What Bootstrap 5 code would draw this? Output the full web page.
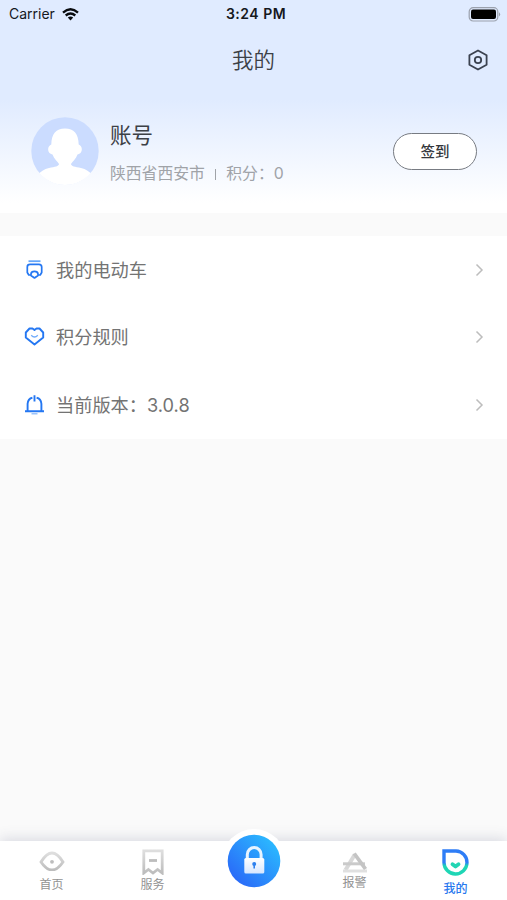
<!DOCTYPE html>
<html lang="zh-CN">
<head>
<meta charset="utf-8">
<meta name="viewport" content="width=device-width, initial-scale=1">
<title>我的</title>
<link href="https://cdn.jsdelivr.net/npm/bootstrap@5.3.0/dist/css/bootstrap.min.css" rel="stylesheet">
<style>
body{background:#fafafa;font-family:Inter,"Noto Sans CJK SC",sans-serif;color:#3c4046;height:900px;overflow:hidden}
svg{display:block;flex:none}
.hero{height:213px;background:linear-gradient(#e0ebff 0,#e0ebff 100px,#fff 203px)}
.statusbar{height:28px;padding:0 6px 0 9px;font-size:14px;line-height:28px;color:#15181d}
.clock{font-weight:600;font-size:14px;letter-spacing:.5px;padding-left:2px}
.side{width:120px}
.titlebar{height:64px;padding:0 19px}
.titlebar-gap{width:20px}
.page-title{font-size:21.5px;line-height:30px;font-weight:350}
.profile{height:121px;padding:0 30px 3px 31px}
.who{padding-left:11px}
.who-name{font-size:21.5px;line-height:30px;margin-top:4px}
.who-info{font-size:15.8px;line-height:24px;margin-top:12px;color:#a0a3a8;white-space:nowrap}
.who-bar{width:1.5px;height:11px;background:#a0a3a8;margin:0 10px 0 10px}
.sign{width:84px;height:37px;border:1px solid #777b82;background:#fff;font-size:14.5px;font-weight:500;padding:2px 0 0;color:#33363b}
.menu{margin-top:23px;height:203px;padding-top:.5px;background:#fff}
.menu .list-group-item{height:67.3px;padding:0 23px 0 24px;background:none;color:#737373;font-size:18.2px;line-height:28px}
.menu span{margin-left:11px}
.tabs{height:59px;background:#fff;box-shadow:0 -3px 12px rgba(70,80,120,.17);font-size:12px;line-height:16px;color:#929292}
.tab{width:101px;padding-top:8px}
.tab svg{margin-bottom:6px}
.tab.on{color:#2878ee;font-weight:500}
.lockwrap{width:64px;height:64px;background:#fff;margin-top:-12px}
</style>
<script src="https://cdn.jsdelivr.net/npm/bootstrap@5.3.0/dist/js/bootstrap.bundle.min.js"></script>
</head>
<body class="d-flex flex-column">
<header class="hero">
  <div class="statusbar d-flex justify-content-between align-items-center">
    <div class="side d-flex align-items-center gap-2">Carrier
      <svg style="margin-left:-1px" width="17" height="13" viewBox="0 0 17 13" fill="none" stroke="#090b0e" stroke-width="2.3"><path d="M1 4.6Q8.500-2 16 4.600M3.700 7.500Q8.500 3.500 13.300 7.500"/><path d="M5.800 9.500Q8.500 7.300 11.200 9.500L8.500 12.400Z" fill="#090b0e" stroke="none"/></svg>
    </div>
    <div class="clock">3:24 PM</div>
    <div class="side d-flex justify-content-end">
      <svg width="33" height="15" viewBox="0 0 33 15"><rect x="1.200" y=".7" width="28.600" height="13.300" rx="4" fill="none" stroke="#9ba1ad" stroke-width="1.200"/><rect x="3" y="2.600" width="25" height="9.500" rx="2" fill="#000"/><path d="M31 5.200q2.400 2.200 0 4.400z" fill="#9ba1ad"/></svg>
    </div>
  </div>
  <div class="titlebar d-flex justify-content-between align-items-center">
    <div class="titlebar-gap"></div>
    <h1 class="page-title m-0">我的</h1>
    <svg width="20" height="22" viewBox="0 0 20 22" fill="none" stroke="#3b4250" stroke-width="1.800"><path stroke-linejoin="round" d="M10 1.500 18.600 6.200V15.800L10 20.500 1.400 15.800V6.200Z"/><circle cx="10" cy="11" r="3.200"/></svg>
  </div>
  <div class="profile d-flex align-items-center">
    <svg width="68" height="68" viewBox="0 0 68 68"><defs><clipPath id="face"><circle cx="34" cy="34" r="34"/></clipPath></defs><circle cx="34" cy="34" r="33.700" fill="#cbdcff"/><g fill="#fff" clip-path="url(#face)"><path d="M34 11.500C25 11.500 20.500 17 20.300 27.500C16.500 29 16.500 34 18.500 36C19.500 37 20.700 37 21.500 37.500C23 42 26.500 44.500 28 47C28 49 24 50 18 51C13 52 10 54.500 5 59V68H63V59C58 54.500 55 52 50 51C44 50 40 49 40 47C41.500 44.500 45 42 46.500 37.500C47.300 37 48.500 37 49.500 36C51.500 34 51.500 29 47.700 27.500C47.500 17 43 11.500 34 11.500Z"/></g></svg>
    <div class="who flex-grow-1">
      <div class="who-name">账号</div>
      <div class="who-info d-flex align-items-center">陕西省西安市<i class="who-bar"></i>积分：0</div>
    </div>
    <button class="btn rounded-pill sign" type="button">签到</button>
  </div>
</header>

<main class="menu list-group list-group-flush rounded-0">
  <div class="list-group-item border-0 d-flex align-items-center">
    <svg width="21" height="22" viewBox="0 0 21 22" fill="none" stroke="#2477f2" stroke-width="1.700"><path d="M4.500 2.200H16.500" stroke="#65a7fa" stroke-width="1.800"/><path stroke-linejoin="round" d="M6.800 16H4.800L3.300 13.500V8Q3.300 5.300 6 5.300H15Q17.700 5.300 17.700 8V13.500L16.200 16H14.200"/><path stroke-linejoin="round" d="M7 16.500V14.800Q7.300 12.300 10.500 12.300T14 14.800V16.500L10.500 19Z"/></svg>
    <span class="flex-grow-1">我的电动车</span>
    <svg width="9" height="14" viewBox="0 0 9 14" fill="none" stroke="#bdbdbd" stroke-width="1.500"><path d="M1.500 1.500 7 7 1.500 12.500"/></svg>
  </div>
  <div class="list-group-item border-0 d-flex align-items-center">
    <svg width="21" height="22" viewBox="0 0 21 22" fill="none" stroke="#2477f2" stroke-width="1.900"><path stroke-linejoin="round" d="M10.500 4 8.500 2.500H5.500L1.800 6.500V11.500L10.500 18.500 19.200 11.500V6.500L15.500 2.500H12.500Z"/><path d="M7.200 9.300Q10.500 12.700 13.800 9.300" stroke="#74adfa" stroke-width="1.300"/></svg>
    <span class="flex-grow-1">积分规则</span>
    <svg width="9" height="14" viewBox="0 0 9 14" fill="none" stroke="#bdbdbd" stroke-width="1.500"><path d="M1.500 1.500 7 7 1.500 12.500"/></svg>
  </div>
  <div class="list-group-item border-0 d-flex align-items-center">
    <svg width="21" height="22" viewBox="0 0 21 22" fill="none" stroke="#2477f2" stroke-width="1.900"><path d="M1 17.300H20M3.600 17V9.800Q4 4.600 8.400 3.700M12.600 3.700Q17 4.600 17.400 9.800V17M10.500 1.300V7.500"/><path d="M7.500 19.800H13.500" stroke="#82b5fb" stroke-width="1.200"/></svg>
    <span class="flex-grow-1">当前版本：3.0.8</span>
    <svg width="9" height="14" viewBox="0 0 9 14" fill="none" stroke="#bdbdbd" stroke-width="1.500"><path d="M1.500 1.500 7 7 1.500 12.500"/></svg>
  </div>
</main>

<nav class="tabs mt-auto d-flex justify-content-center">
  <div class="tab d-flex flex-column align-items-center">
    <svg width="26" height="22" viewBox="0 0 26 22" fill="none"><defs><linearGradient id="gr" x2="0" y2="1"><stop stop-color="#dedede"/><stop offset="1" stop-color="#bdbdbd"/></linearGradient></defs><path d="M2 13Q7.500 4 13 4T24 13Q18.500 21 13 21T2 13Z" stroke="url(#gr)" stroke-width="2.800"/><circle cx="13" cy="12.800" r="1.900" fill="#bdbdbd"/></svg>
    首页
  </div>
  <div class="tab d-flex flex-column align-items-center">
    <svg width="22" height="26" viewBox="0 0 22 26" fill="none" style="margin-bottom:2px"><path d="M1.800 1.800H20.200V24L15.600 20.500 11 24 6.400 20.500 1.800 24Z" stroke="url(#gr)" stroke-width="2.800"/><path d="M7 11.500H15" stroke="#bdbdbd" stroke-width="2.800"/></svg>
    服务
  </div>
  <div class="tab pt-0 d-flex justify-content-center">
    <div class="lockwrap rounded-circle d-flex align-items-center justify-content-center flex-shrink-0">
      <svg class="m-0" width="54" height="54" viewBox="0 0 54 54"><defs><linearGradient id="bl" x1="0" y1="1" x2="1" y2="0"><stop offset=".15" stop-color="#2a6cf8"/><stop offset=".9" stop-color="#2bbcff"/></linearGradient><linearGradient id="wh" x2="0" y2="1"><stop stop-color="#fff"/><stop offset="1" stop-color="#d6e6ff"/></linearGradient></defs><circle cx="27" cy="27" r="26.300" fill="url(#bl)"/><path d="M20.300 25V20.500a6.900 6.900 0 0 1 13.800 0V25" fill="none" stroke="#e8f4ff" stroke-width="3"/><rect x="17.300" y="24" width="20" height="15.500" rx="1.600" fill="url(#wh)"/><circle cx="27.200" cy="30" r="2" fill="#2d80ee"/><path d="M26.400 30h1.600v4.500h-1.600z" fill="#2d80ee"/></svg>
    </div>
  </div>
  <div class="tab d-flex flex-column align-items-center">
    <svg width="26" height="22" viewBox="0 0 26 22" fill="none" style="margin-bottom:2px;margin-top:2px"><path d="M3.500 19 12.800 3.500" stroke="#d8d8d8" stroke-width="4"/><path d="M1 20H25" stroke="#e0e0e0" stroke-width="3"/><path d="M1 12.800H23" stroke="#cacaca" stroke-width="3"/><path d="M12.200 2.500 23.500 18" stroke="#c4c4c4" stroke-width="3.800"/></svg>
    报警
  </div>
  <div class="tab on d-flex flex-column align-items-center">
    <svg width="27" height="27" viewBox="0 0 27 27" fill="none" style="margin-bottom:5px"><defs><linearGradient id="my" x2="0" y2="1"><stop offset=".5" stop-color="#2e7df6"/><stop offset=".65" stop-color="#1ed6b5"/></linearGradient></defs><path d="M2 2H14A11.500 11.500 0 1 1 2 13.500Z" stroke="url(#my)" stroke-width="3.400"/><path d="M10.500 15.200 13.500 17.500 16.500 15.200" stroke="#22d5b3" stroke-width="3.800" stroke-linecap="round" stroke-linejoin="round"/></svg>
    我的
  </div>
</nav>
</body>
</html>
